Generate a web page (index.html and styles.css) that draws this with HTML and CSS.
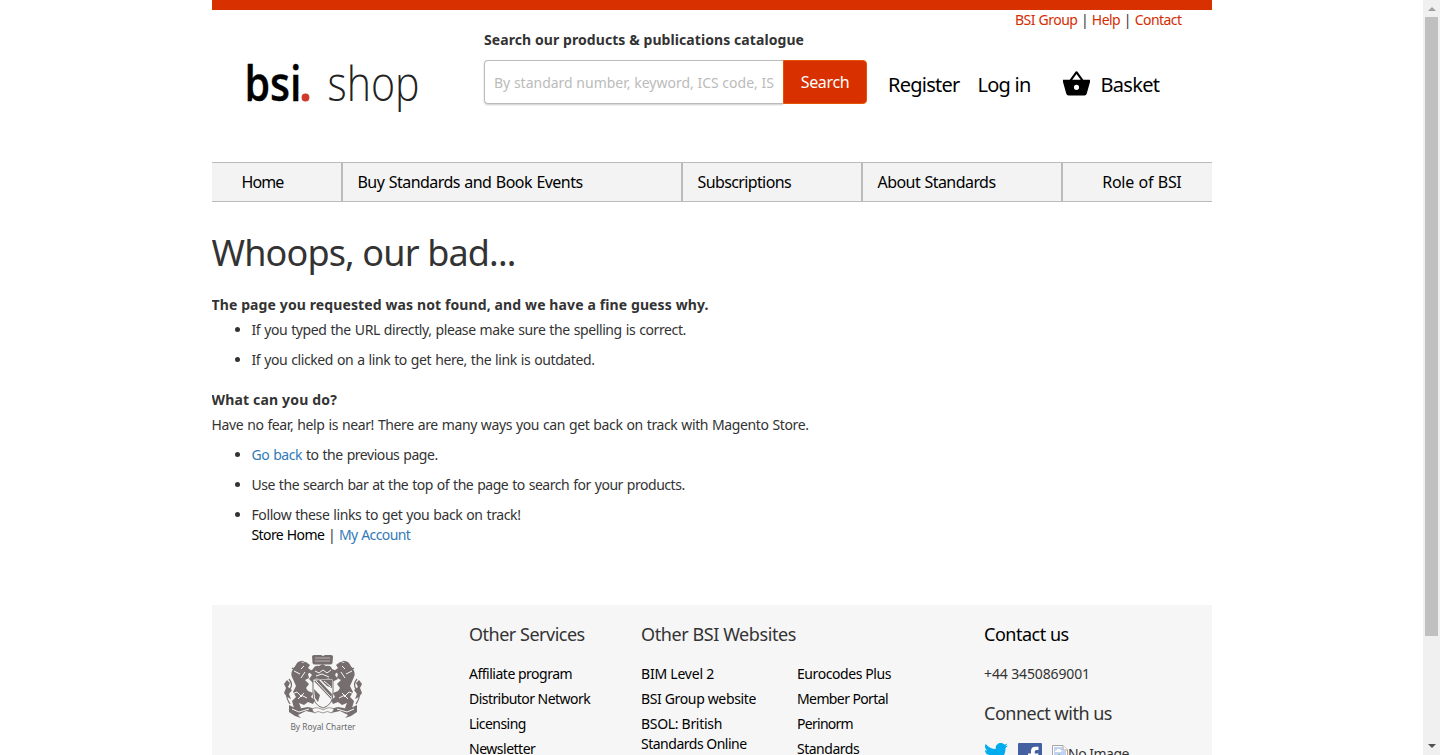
FILE: index.html
```html
<!DOCTYPE html>
<html lang="en">
<head>
<meta charset="utf-8">
<title>BSI Shop</title>
<link rel="stylesheet" href="styles.css">
</head>
<body>
<div class="page">
  <header class="header">
    <svg class="logo" viewBox="0 0 180 56" role="img" aria-label="bsi shop">
      <text class="logo-bsi" x="-1.500" y="41" textLength="57" lengthAdjust="spacingAndGlyphs">bsi</text>
      <circle cx="59.500" cy="37.500" r="3.900" fill="#d03a2b"/>
      <text class="logo-shop" x="81.500" y="41" textLength="92" lengthAdjust="spacingAndGlyphs">shop</text>
    </svg>
    <div class="search">
      <label class="search-label">Search our products &amp; publications catalogue</label>
      <div class="search-row">
        <div class="search-input"><div class="placeholder">By standard number, keyword, ICS code, ISBN</div></div>
        <button class="search-button">Search</button>
      </div>
    </div>
    <div class="header-right">
      <div class="top-links"><a>BSI Group</a> | <a>Help</a> | <a>Contact</a></div>
      <div class="account">
        <a class="register">Register</a>
        <a class="login">Log in</a>
        <svg class="basket-icon" viewBox="0 0 27 25"><path fill-rule="evenodd" d="M0 8.800H6.700L12.700.600Q13.500-.300 14.300.600L20.300 8.800H27V11L23.700 22.700Q23.100 24.500 21.500 24.500H5.500Q3.900 24.500 3.300 22.700L0 11ZM9.300 8.800H17.700L13.500 3ZM13.500 13.700A2.600 2.600 0 1 0 13.500 18.900A2.600 2.600 0 1 0 13.500 13.700Z"/></svg>
        <a class="basket">Basket</a>
      </div>
    </div>
  </header>
  <nav class="nav">
    <a class="nav-home">Home</a>
    <a class="nav-buy">Buy Standards and Book Events</a>
    <a class="nav-subs">Subscriptions</a>
    <a class="nav-about">About Standards</a>
    <a class="nav-role">Role of BSI</a>
  </nav>
  <main class="main">
    <h1>Whoops, our bad...</h1>
    <h2>The page you requested was not found, and we have a fine guess why.</h2>
    <ul>
      <li>If you typed the URL directly, please make sure the spelling is correct.</li>
      <li class="outdated">If you clicked on a link to get here, the link is outdated.</li>
    </ul>
    <h2 class="second">What can you do?</h2>
    <p class="intro">Have no fear, help is near! There are many ways you can get back on track with Magento Store.</p>
    <ul>
      <li class="back"><a>Go back</a> to the previous page.</li>
      <li class="use">Use the search bar at the top of the page to search for your products.</li>
      <li>Follow these links to get you back on track!<br><span class="links"><a class="dark">Store Home</a> | <a>My Account</a></span></li>
    </ul>
  </main>
  <footer class="footer">
    <div class="charter">
      <svg class="crest" viewBox="0 0 78 63">
        <g fill="#766e6e">
          <path d="M28 1.500Q28 0 30 0H37L39 1 41 0H47Q49 0 49 1.500L48.500 8Q48 10 45 9.500H32Q29 10 28.500 8Z"/>
          <path d="M29 14Q31 10 35 11L38.500 9 42 11Q47 10 48 14L53 16 51 20 54 24 48 27 45 23 38 25 32 23 29 28 25 24 28 20 25 17Z"/>
          <g id="lion">
            <path d="M8 22Q6 17 10 13L13 8Q15 5 19 8L22 7 26 10 24 13 28 16 24 19 25 23 21 25 25 29 22 33 24 36 29 38 27 42 31 45 29 49 24 47 20 50 15 48 17 53 14 57 10 53 8 46 12 42 9 37 12 31Z"/>
            <path d="M3 25L6 28 4 32 8 35 5 39 7 44 3 42 0 38 2 33 0 29Z"/>
            <path d="M5 50L13 54 24 52 32 54 31 58 22 56 14 60 17 63 11 61 5 57Z"/>
          </g>
          <use href="#lion" transform="matrix(-1 0 0 1 78 0)"/>
        </g>
        <g fill="none" stroke="#766e6e" stroke-width="1.200">
          <path d="M6 49Q0 40 5 35T5 24M72 49Q78 40 73 35T73 24M23 10Q18 3 14 9T8 13M55 10Q60 3 64 9T70 13"/>
        </g>
        <g fill="none" stroke="#f6f6f6" stroke-width="1">
          <path d="M10 16L16 19M8 39L13 37 18 42M14 44L20 38M20 11L17 14M17 40L23 43M68 16L62 19M70 39L65 37 60 42M64 44L58 38M58 11L61 14M61 40L55 43M31 16L35 18 39 15 43 18 47 15M32 21L38 19 45 22M8 54L15 57 25 54M70 54L63 57 53 54M21 17L17 23M57 17L61 23"/>
          <path stroke="#b8b3b3" d="M31 3H46M31 6H46"/>
        </g>
        <path d="M29 24H49V38Q49 50 39 53Q29 50 29 38Z" fill="#f6f6f6" stroke="#766e6e"/>
        <path d="M30 26L35 25 48 39 47 44ZM37 25H48V33L43 31ZM30 34L36 40 34 47 31 43Z" fill="#766e6e"/>
        <path d="M32 26L47 42M40 26L47 32" stroke="#f6f6f6" fill="none"/>
        <path d="M28 54Q33 51 39 55Q45 51 50 54L48 58Q43 55 39 58Q34 55 30 58Z" fill="#f6f6f6" stroke="#8a8383" stroke-width=".8"/>
      </svg>
      <span class="charter-text">By Royal Charter</span>
    </div>
    <div class="col services">
      <h3>Other Services</h3>
      <a>Affiliate program</a><a class="ls-55">Distributor Network</a><a class="ls-55">Licensing</a><a>Newsletter</a>
    </div>
    <div class="col websites">
      <h3 class="ls-42">Other BSI Websites</h3>
      <div class="pair">
        <div><a class="ls-22">BIM Level 2</a><a class="ls-35">BSI Group website</a><a><span class="ls-31">BSOL: British</span><br>Standards Online</a></div>
        <div><a class="ls-42">Eurocodes Plus</a><a class="ls-60">Member Portal</a><a class="ls-70">Perinorm</a><a>Standards</a></div>
      </div>
    </div>
    <div class="col contact">
      <h3 class="black">Contact us</h3>
      <p>+44 3450869001</p>
      <h3>Connect with us</h3>
      <div class="social">
        <svg class="twitter" viewBox="0 0 24 20"><path fill="#00aced" d="M24 2.400a9.800 9.800 0 0 1-2.800.8A4.900 4.900 0 0 0 23.300.400a9.800 9.800 0 0 1-3.100 1.200A4.900 4.900 0 0 0 11.800 6 14 14 0 0 1 1.700.900 4.900 4.900 0 0 0 3.200 7.500 4.900 4.900 0 0 1 1 6.900 4.900 4.900 0 0 0 4.900 11.700 4.900 4.900 0 0 1 2.700 11.800 4.900 4.900 0 0 0 7.300 15.200 9.900 9.900 0 0 1 0 17.300 14 14 0 0 0 21.500 4.900 10 10 0 0 0 24 2.400Z"/></svg>
        <svg class="facebook" viewBox="0 0 24 24"><path fill="#4460a0" d="M1 0H23Q24 0 24 1V24H0V1Q0 0 1 0Z"/><path fill="#fff" d="M13 24V14H10V10.500H13V8Q13 3.700 17.500 3.700H20.500V7H18.500Q16.700 7 16.700 8.700V10.500H20.500L20 14H16.700V24Z"/></svg>
        <svg class="broken" viewBox="0 0 16 16"><path d="M.5.500H11L15.500 5V15.500H.5Z" fill="#fff" stroke="#a5a5a5"/><path d="M2 2H10.500V6H14V14H2Z" fill="#c2d2f3"/><path d="M3 7Q3 5 5 5Q6 3 8 4.500Q10 5 9.500 7Z" fill="#fff"/><path d="M11 .5V5H15.500" fill="#fff" stroke="#a5a5a5"/><path d="M2 14L7 9 14 14Z" fill="#52a843"/></svg>
        <span class="alt">No Image</span>
      </div>
    </div>
  </footer>
</div>
<div class="scrollbar"><i class="up"></i><div class="thumb"></div><i class="down"></i></div>
</body>
</html>
```
FILE: styles.css
```css
*{box-sizing:border-box}
body{margin:0;height:755px;overflow:hidden;padding-right:17px;background:#fff;color:#333;font:14px/20px "Noto Sans",sans-serif}
h1,h2,h3,p,ul{margin:0}
.page{width:1000px;height:755px;overflow:hidden;margin:0 auto;border-top:10px solid #d93000}

.header{display:flex;height:152px}
.logo{width:180px;height:56px;margin:50px 58px 0 34px;overflow:visible;flex:none}
.logo text{font-family:"Open Sans","Noto Sans",sans-serif;font-size:48.500px}
.logo-bsi{font-weight:600;fill:#000;stroke:#000;stroke-width:.4px}
.logo-shop{font-weight:300;fill:#222}
.search{width:384px;flex:none;padding-top:20px}
.search-label{display:block;padding-left:.5px;font-weight:700;letter-spacing:.077px}
.search-row{display:flex;margin-top:10px}
.search-input{width:299.500px;height:44px;border:1px solid #bbb;border-right:0;border-radius:4px 0 0 4px;box-shadow:0 1px 2px #ccc;padding:0 9px 0 9.500px}
.placeholder{overflow:hidden;white-space:nowrap;line-height:44px;color:#bbb}
.search-button{width:84px;height:44px;padding:0 1px 1px;border:1px solid #e55300;border-radius:0 4px 4px 0;background:#d93000;color:#fff;font:16px "Noto Sans",sans-serif;letter-spacing:-.36px}
.header-right{flex:1}
.top-links{padding-right:30px;text-align:right;letter-spacing:-.55px;word-spacing:.6px;white-space:nowrap}
.top-links a{color:#d52b00}
.account{display:flex;align-items:flex-start;padding:41px 0 0 20.500px;color:#000;font-size:20px;line-height:28px;white-space:nowrap}
.register{width:89.500px;letter-spacing:-.754px}
.login{width:85px;letter-spacing:-.768px}
.basket-icon{width:27px;height:25px;flex:none;margin-right:11px}
.basket{letter-spacing:-.7px}

.nav{display:flex;height:40px;border:solid #bbb;border-width:1px 0;background:#f3f3f3;color:#000;font-size:16px;line-height:38px;white-space:nowrap}
.nav a{border:solid #bbb;border-width:0 1px;padding-left:15px}
.nav a:first-child{border-left:0;padding-left:30px}
.nav a:last-child{border-right:0;padding:0 30px 0 0;text-align:right}
.nav-home{width:130px;letter-spacing:-.883px}
.nav-buy{width:340px;letter-spacing:-.54px;word-spacing:.8px}
.nav-subs{width:180px;letter-spacing:-.621px}
.nav-about{width:200px;letter-spacing:-.56px;word-spacing:.8px}
.nav-role{width:150px;letter-spacing:-.3px;word-spacing:.8px}

.main{height:403px;padding-top:31px}
h1{margin-bottom:22px;font-size:36px;font-weight:400;line-height:40px;letter-spacing:-.853px}
h2{margin-bottom:5px;font-size:14px;line-height:20px;letter-spacing:.114px}
h2.second{margin-top:20px;letter-spacing:.17px}
.main ul{padding-left:40px;letter-spacing:-.4px;word-spacing:.7px}
.main li+li{margin-top:10px}
.main .intro{margin-bottom:10px;letter-spacing:-.388px;word-spacing:.7px}
.main a{color:#337ab7}
.main a.dark{color:#000}
.main .outdated{letter-spacing:-.405px}
.main .back{letter-spacing:-.445px}
.main .use{letter-spacing:-.458px}
.main .links{letter-spacing:-.6px}

.footer{display:flex;height:200px;background:#f6f6f6}
.charter{width:257.500px;flex:none;padding:50px 34.500px 0 0;display:flex;flex-direction:column;align-items:center}
.crest{width:78px;height:63px}
.charter-text{color:#666;font-size:8.300px;line-height:18px;letter-spacing:.04px}
.col{flex:none;padding-top:19px;letter-spacing:-.49px}
.col h3{margin-bottom:20px;font-size:18px;font-weight:400;line-height:20px;white-space:nowrap}
.col a{display:block;margin-bottom:5px;color:#000;white-space:nowrap}
.services{width:172px}
.websites{width:343px}
.pair{display:flex}
.pair>div{width:156px}
.contact p{margin-bottom:19px;letter-spacing:-.125px}
.black{color:#000}
.social{display:flex}
.twitter{width:24px;height:20px;margin-right:10px}
.facebook{width:24px;height:24px;margin-right:10px}
.broken{width:16px;height:16px;margin-top:2px}
.alt{line-height:22px;letter-spacing:-.5px}

.ls-22{letter-spacing:-.219px}
.ls-31{letter-spacing:-.307px}
.ls-35{letter-spacing:-.354px}
.ls-42{letter-spacing:-.418px}
.ls-55{letter-spacing:-.55px}
.ls-60{letter-spacing:-.605px}
.ls-70{letter-spacing:-.721px}

.scrollbar{position:fixed;top:0;right:0;width:17px;height:755px;padding:7px 2px 7px;background:#f0f0f0;display:flex;flex-direction:column;align-items:center}
.up,.down{width:0;height:0;border:solid transparent;border-width:0 4px}
.up{border-bottom:4px solid #a0a0a0}
.down{border-top:4px solid #505050;margin-top:auto}
.thumb{width:13px;height:619px;margin-top:6px;background:#c0c0c0}
```
